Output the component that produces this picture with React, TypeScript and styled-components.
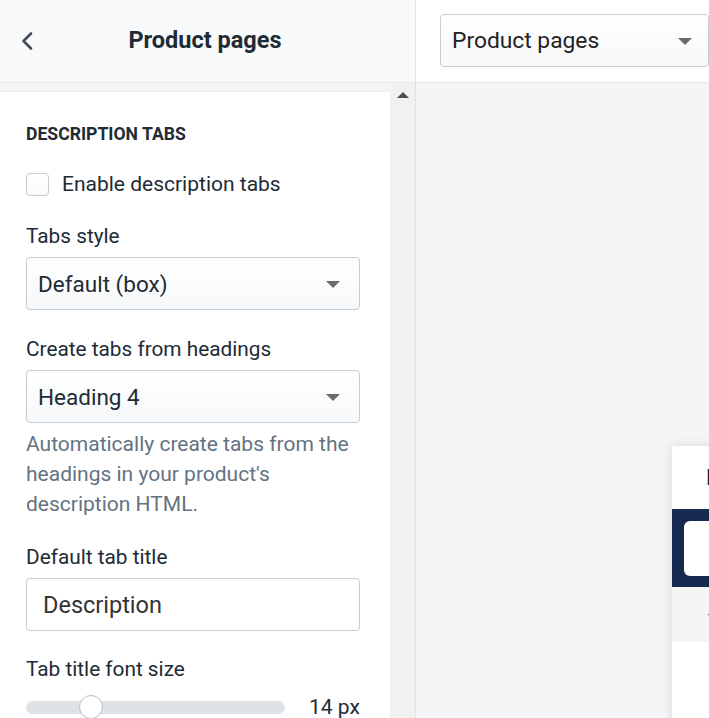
import styled, { createGlobalStyle } from "styled-components";

const GlobalStyle = createGlobalStyle`
  html, body {
    margin: 0;
    padding: 0;
    height: 100%;
    overflow: hidden;
  }
  body {
    font-family: Roboto, "Liberation Sans", Arial, sans-serif;
    color: #212b36;
  }
  #root {
    height: 100%;
  }
`;

const Layout = styled.div`
  display: flex;
  width: 709px;
  height: 718px;
  overflow: hidden;
`;

const Sidebar = styled.aside`
  flex: 0 0 415px;
  display: flex;
  flex-direction: column;
  border-right: 1px solid #e1e3e5;
  background: #f3f4f6;
`;

const SidebarHeader = styled.header`
  position: relative;
  height: 83px;
  flex: 0 0 83px;
  display: flex;
  align-items: center;
  justify-content: center;
  background: #f9fafb;
  border-bottom: 1px solid #e4e6e8;
  box-sizing: border-box;
`;

const BackButton = styled.button`
  position: absolute;
  left: 14px;
  top: 28px;
  width: 26px;
  height: 26px;
  padding: 0;
  border: none;
  background: none;
  display: flex;
  align-items: center;
  justify-content: center;
  color: #454f5b;
`;

const HeaderTitle = styled.h1`
  margin: 0 0 2px -5px;
  font-size: 23.5px;
  font-weight: 700;
  color: #212b36;
`;

const ScrollArea = styled.div`
  flex: 1;
  display: flex;
  min-height: 0;
`;

const Panel = styled.div`
  flex: 0 0 390px;
  margin-top: 8px;
  background: #fff;
  border-top: 1px solid #eaecee;
  padding: 32px 30px 0 26px;
  box-sizing: border-box;
  overflow: hidden;
`;

const Scrollbar = styled.div`
  flex: 0 0 25px;
  background: #f1f1f1;
  display: flex;
  justify-content: center;
  padding-top: 9px;
  box-sizing: border-box;
`;

const ScrollArrow = styled.div`
  width: 0;
  height: 0;
  border-left: 6px solid transparent;
  border-right: 6px solid transparent;
  border-bottom: 6px solid #505050;
`;

const SectionTitle = styled.h2`
  margin: 0;
  font-size: 17.6px;
  line-height: 20px;
  font-weight: 700;
  color: #212b36;
  text-transform: uppercase;
`;

const CheckRow = styled.label`
  display: flex;
  align-items: center;
  gap: 13px;
  margin-top: 28px;
  height: 24px;
  font-size: 21px;
  color: #212b36;
`;

const CheckBox = styled.span`
  flex: 0 0 23px;
  width: 23px;
  height: 23px;
  box-sizing: border-box;
  border: 1px solid #c4cdd5;
  border-radius: 4px;
  background: linear-gradient(#fff, #f9fafb);
`;

const Field = styled.div<{ $gap?: number }>`
  margin-top: ${(p) => p.$gap ?? 28}px;
`;

const Label = styled.div`
  font-size: 20.8px;
  line-height: 24px;
  color: #212b36;
  margin-bottom: 9px;
`;

const Select = styled.div`
  position: relative;
  height: 53px;
  box-sizing: border-box;
  border: 1px solid #c4cdd5;
  border-radius: 4px;
  background: linear-gradient(#ffffff, #f6f8f9);
  display: flex;
  align-items: center;
  padding: 0 40px 0 11px;
  font-size: 22.5px;
  color: #212b36;
`;

const Caret = styled.span<{ $right?: number }>`
  position: absolute;
  right: ${(p) => p.$right ?? 19}px;
  top: 50%;
  margin-top: -3px;
  width: 0;
  height: 0;
  border-left: 7px solid transparent;
  border-right: 7px solid transparent;
  border-top: 7px solid #6b6b6b;
`;

const HelpText = styled.p`
  margin: 6px 0 0;
  font-size: 21px;
  line-height: 30px;
  color: #637381;
`;

const TextInput = styled.input`
  display: block;
  width: 100%;
  height: 53px;
  box-sizing: border-box;
  border: 1px solid #c4cdd5;
  border-radius: 4px;
  padding: 0 16px;
  font-family: Roboto, "Liberation Sans", Arial, sans-serif;
  font-size: 23.5px;
  color: #333;
  background: #fff;
  outline: none;
`;

const SliderRow = styled.div`
  display: flex;
  align-items: center;
  gap: 24px;
  height: 36px;
  margin-top: -1px;
`;

const Track = styled.div`
  position: relative;
  flex: 0 0 259px;
  height: 13px;
  border-radius: 7px;
  background: #dfe3e8;
`;

const Thumb = styled.span`
  position: absolute;
  top: 50%;
  width: 22px;
  height: 22px;
  margin: -12px 0 0 -12px;
  border-radius: 50%;
  background: #fff;
  border: 1px solid #b5bdc6;
`;

const SliderValue = styled.span`
  font-size: 21px;
  color: #212b36;
`;

const Main = styled.main`
  flex: 1;
  display: flex;
  flex-direction: column;
  min-width: 0;
  background: #f4f5f7;
`;

const TopBar = styled.div`
  height: 83px;
  flex: 0 0 83px;
  box-sizing: border-box;
  background: #fff;
  border-bottom: 1px solid #e4e6e8;
  padding: 14px 0 0 24px;
`;

const PageSelect = styled(Select)`
  width: 269px;
  height: 53px;
  background: linear-gradient(#ffffff, #f7f8fa);
  font-size: 22.8px;
  color: #222;
`;

const Canvas = styled.div`
  flex: 1;
  overflow: hidden;
  padding: 363px 0 0 256px;
`;

const PreviewCard = styled.div`
  width: 420px;
  height: 400px;
  background: #fff;
  box-shadow: 0 0 10px rgba(0, 0, 0, 0.12);
`;

const PreviewHeader = styled.div`
  height: 63px;
  display: flex;
  align-items: center;
  padding-left: 34px;
  font-size: 22px;
  color: #1a1a2e;
`;

const NavBand = styled.div`
  height: 78px;
  background: #172b50;
  padding: 12px;
  box-sizing: border-box;
`;

const SearchBox = styled.div`
  height: 55px;
  border-radius: 6px;
  background: #fff;
`;

const CrumbBand = styled.div`
  height: 55px;
  background: #f5f5f5;
  display: flex;
  align-items: center;
  padding-left: 35px;
  font-size: 14px;
  color: #555;
`;

export default function App() {
  return (
    <>
      <GlobalStyle />
      <Layout>
        <Sidebar>
          <SidebarHeader>
            <BackButton aria-label="Back">
              <svg width="14" height="20" viewBox="0 0 14 20" fill="none">
                <path
                  d="M11 2.5 3.5 10l7.5 7.5"
                  stroke="currentColor"
                  strokeWidth="2.6"
                  strokeLinecap="round"
                  strokeLinejoin="round"
                />
              </svg>
            </BackButton>
            <HeaderTitle>Product pages</HeaderTitle>
          </SidebarHeader>
          <ScrollArea>
            <Panel>
              <SectionTitle>Description tabs</SectionTitle>
              <CheckRow>
                <CheckBox />
                Enable description tabs
              </CheckRow>
              <Field>
                <Label>Tabs style</Label>
                <Select>
                  Default (box)
                  <Caret />
                </Select>
              </Field>
              <Field $gap={27}>
                <Label>Create tabs from headings</Label>
                <Select>
                  Heading 4
                  <Caret />
                </Select>
                <HelpText>
                  Automatically create tabs from the headings in your
                  product's description HTML.
                </HelpText>
              </Field>
              <Field $gap={26}>
                <Label>Default tab title</Label>
                <TextInput defaultValue="Description" />
              </Field>
              <Field $gap={26}>
                <Label>Tab title font size</Label>
                <SliderRow>
                  <Track>
                    <Thumb style={{ left: `${(65 / 259) * 100}%` }} />
                  </Track>
                  <SliderValue>14 px</SliderValue>
                </SliderRow>
              </Field>
            </Panel>
            <Scrollbar>
              <ScrollArrow />
            </Scrollbar>
          </ScrollArea>
        </Sidebar>
        <Main>
          <TopBar>
            <PageSelect>
              Product pages
              <Caret $right={16} />
            </PageSelect>
          </TopBar>
          <Canvas>
            <PreviewCard>
              <PreviewHeader>Product</PreviewHeader>
              <NavBand>
                <SearchBox />
              </NavBand>
              <CrumbBand>— Home</CrumbBand>
            </PreviewCard>
          </Canvas>
        </Main>
      </Layout>
    </>
  );
}
